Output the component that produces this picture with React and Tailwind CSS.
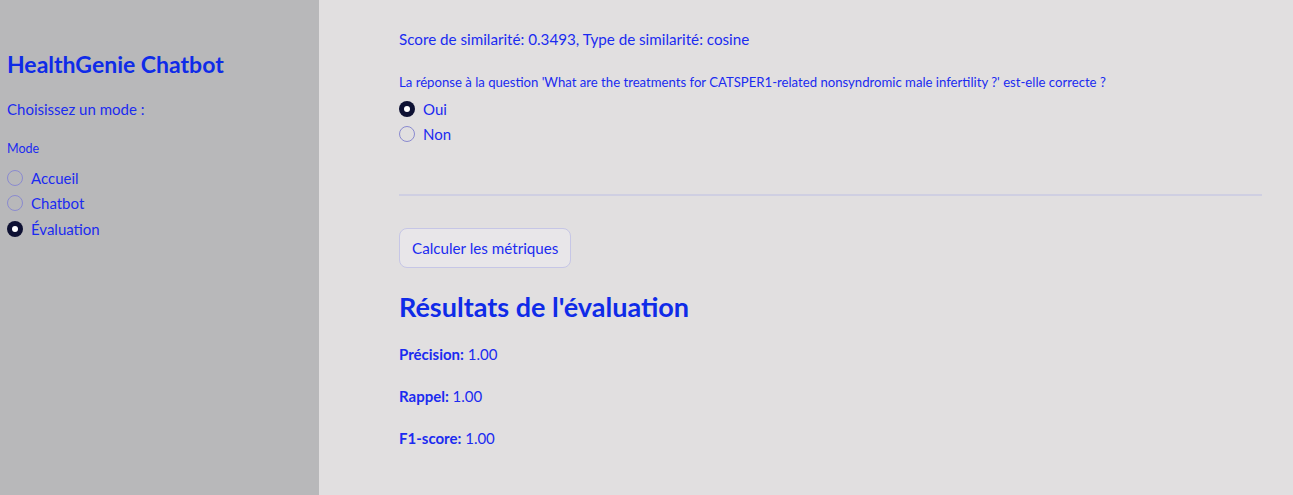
import React, { useState } from 'react';

const font = { fontFamily: 'Lato, "Noto Sans", sans-serif' };

function Radio({ checked, label, onSelect }) {
  return (
    <label className="flex items-center h-[25.5px] cursor-pointer" onClick={onSelect}>
      {checked ? (
        <span className="w-4 h-4 rounded-full bg-[#0e1133] flex items-center justify-center">
          <span className="w-[6px] h-[6px] rounded-full bg-white" />
        </span>
      ) : (
        <span className="w-4 h-4 rounded-full border border-[#8a8ad0]" />
      )}
      <span className="ml-2 text-[15px] text-[#1b2bf0]">{label}</span>
    </label>
  );
}

export default function App() {
  const [mode, setMode] = useState('Évaluation');
  const [answer, setAnswer] = useState('Oui');

  return (
    <div className="flex w-full h-[495px] bg-[#e1dfe0] text-[#1b2bf0]" style={font}>
      <aside className="w-[319px] shrink-0 bg-[#b8b8ba] pl-[7px] pr-2 pt-[48px]">
        <h2 className="text-[23px] font-bold leading-8 text-[#0f2be8]">HealthGenie Chatbot</h2>
        <p className="mt-[17px] text-[15px] leading-6">Choisissez un mode :</p>
        <div className="mt-[18px] text-[12.5px] leading-5">Mode</div>
        <div className="mt-[6px]">
          {['Accueil', 'Chatbot', 'Évaluation'].map((m) => (
            <Radio key={m} label={m} checked={mode === m} onSelect={() => setMode(m)} />
          ))}
        </div>
      </aside>

      <main className="flex-1 pl-[80px] pr-[31px] pt-[27px]">
        <p className="text-[15.2px] leading-6">Score de similarité: 0.3493, Type de similarité: cosine</p>
        <p className="mt-[21px] text-[13.15px] leading-5">
          La réponse à la question 'What are the treatments for CATSPER1-related nonsyndromic male infertility ?' est-elle correcte ?
        </p>
        <div className="mt-[4px]">
          {['Oui', 'Non'].map((a) => (
            <Radio key={a} label={a} checked={answer === a} onSelect={() => setAnswer(a)} />
          ))}
        </div>
        <hr className="mt-[47px] border-0 h-[2px] bg-[#cfcfe2]" />
        <button className="mt-[32px] h-[40px] px-3 rounded-lg border border-[#c6c6e6] bg-[#e8e6e9] text-[15.2px] text-[#1b2bf0]">
          Calculer les métriques
        </button>
        <h2 className="mt-[21px] text-[27px] font-bold leading-9 text-[#0f2be8]">Résultats de l'évaluation</h2>
        <div className="mt-[19px] text-[15px] leading-5">
          <p><b>Précision:</b> 1.00</p>
          <p className="mt-[22px]"><b>Rappel:</b> 1.00</p>
          <p className="mt-[22px]"><b>F1-score:</b> 1.00</p>
        </div>
      </main>
    </div>
  );
}
